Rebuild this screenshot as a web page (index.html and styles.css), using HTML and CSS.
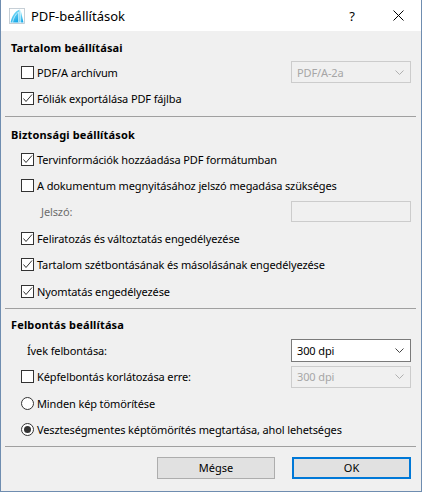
FILE: index.html
```html
<!DOCTYPE html>
<html lang="hu">
<head>
<meta charset="utf-8">
<title>PDF-beállítások</title>
<link rel="stylesheet" href="styles.css">
</head>
<body>
<div class="window">
  <div class="titlebar">
    <svg class="logo" width="16" height="16" viewBox="0 0 16 16">
      <defs>
        <linearGradient id="lg" x1="0" y1="0" x2="0.6" y2="1">
          <stop offset="0" stop-color="#9ff0ff"/>
          <stop offset="1" stop-color="#19a8e6"/>
        </linearGradient>
      </defs>
      <rect x="0.5" y="0.5" width="15" height="15" fill="#ffffff" stroke="#b8c4cc" stroke-width="0.8"/>
      <path d="M1.5 14.5 C2.5 9 5.5 3.5 10.5 1.5 L10.5 14.5 Z" fill="url(#lg)"/>
      <path d="M11.5 1.5 L14.5 14.5 L11.5 14.5 Z" fill="url(#lg)"/>
      <path d="M3.5 14.5 C4.5 10 6.5 6 9.5 4 L9.5 14.5" fill="none" stroke="#e8fbff" stroke-width="0.7"/>
    </svg>
    <span class="title">PDF-beállítások</span>
    <span class="help">?</span>
    <span class="close">
      <svg width="11" height="11" viewBox="0 0 11 11"><path d="M0.5 0.5 L10.5 10.5 M10.5 0.5 L0.5 10.5" stroke="#000" stroke-width="1"/></svg>
    </span>
  </div>

  <div class="content">
    <section class="group first">
      <div class="heading">Tartalom beállításai</div>
      <div class="row">
        <span class="check"><span class="box"></span>PDF/A archívum</span>
        <span class="select disabled">PDF/A-2a<svg class="chev" width="9" height="5" viewBox="0 0 9 5"><path d="M0.5 0.5 L4.5 4.5 L8.5 0.5" fill="none" stroke="currentColor"/></svg></span>
      </div>
      <div class="row">
        <span class="check"><span class="box checked"><svg width="11" height="11" viewBox="0 0 11 11"><path d="M1.5 5.5 L4 8.5 L10 1.5" fill="none" stroke="#333" stroke-width="1"/></svg></span>Fóliák exportálása PDF fájlba</span>
      </div>
    </section>
    <hr class="sep sep1">

    <section class="group second">
      <div class="heading">Biztonsági beállítások</div>
      <div class="row r2">
        <span class="check"><span class="box checked"><svg width="11" height="11" viewBox="0 0 11 11"><path d="M1.5 5.5 L4 8.5 L10 1.5" fill="none" stroke="#333" stroke-width="1"/></svg></span>Tervinformációk hozzáadása PDF formátumban</span>
      </div>
      <div class="row r2">
        <span class="check"><span class="box"></span>A dokumentum megnyitásához jelszó megadása szükséges</span>
      </div>
      <div class="row r2 indent">
        <span class="muted">Jelszó:</span>
        <span class="input disabled"></span>
      </div>
      <div class="row r2">
        <span class="check"><span class="box checked"><svg width="11" height="11" viewBox="0 0 11 11"><path d="M1.5 5.5 L4 8.5 L10 1.5" fill="none" stroke="#333" stroke-width="1"/></svg></span>Feliratozás és változtatás engedélyezése</span>
      </div>
      <div class="row r2">
        <span class="check"><span class="box checked"><svg width="11" height="11" viewBox="0 0 11 11"><path d="M1.5 5.5 L4 8.5 L10 1.5" fill="none" stroke="#333" stroke-width="1"/></svg></span>Tartalom szétbontásának és másolásának engedélyezése</span>
      </div>
      <div class="row r2">
        <span class="check"><span class="box checked"><svg width="11" height="11" viewBox="0 0 11 11"><path d="M1.5 5.5 L4 8.5 L10 1.5" fill="none" stroke="#333" stroke-width="1"/></svg></span>Nyomtatás engedélyezése</span>
      </div>
    </section>
    <hr class="sep sep2">

    <section class="group third">
      <div class="heading">Felbontás beállítása</div>
      <div class="row r3 label-row">
        <span class="plain">Ívek felbontása:</span>
        <span class="select active">300 dpi<svg class="chev" width="9" height="5" viewBox="0 0 9 5"><path d="M0.5 0.5 L4.5 4.5 L8.5 0.5" fill="none" stroke="currentColor"/></svg></span>
      </div>
      <div class="row r3">
        <span class="check"><span class="box"></span>Képfelbontás korlátozása erre:</span>
        <span class="select disabled">300 dpi<svg class="chev" width="9" height="5" viewBox="0 0 9 5"><path d="M0.5 0.5 L4.5 4.5 L8.5 0.5" fill="none" stroke="currentColor"/></svg></span>
      </div>
      <div class="row r3">
        <span class="check"><span class="radio"></span>Minden kép tömörítése</span>
      </div>
      <div class="row r3">
        <span class="check"><span class="radio on"><span class="dot"></span></span>Veszteségmentes képtömörítés megtartása, ahol lehetséges</span>
      </div>
    </section>
    <hr class="sep sep3">

    <div class="buttons">
      <button class="btn cancel">Mégse</button>
      <button class="btn ok">OK</button>
    </div>
  </div>
</div>
</body>
</html>
```

FILE: styles.css
```css
* { box-sizing: border-box; }
html, body { margin: 0; padding: 0; }
body {
  background: #f0f0f0;
  font-family: "Noto Sans", "Open Sans", sans-serif;
  font-size: 11px;
  letter-spacing: -0.12px;
  color: #000;
}
.window {
  width: 422px;
  height: 492px;
  background: #f0f0f0;
  border: 1px solid #6f8db0;
  border-top: none;
  display: flex;
  flex-direction: column;
}
.titlebar {
  height: 31px;
  background: #fff;
  display: flex;
  align-items: center;
  padding-left: 8px;
  margin: 0 -1px;
  border-left: 1px solid #6f8db0;
  border-right: 1px solid #6f8db0;
}
.logo { display: block; flex: none; }
.title {
  margin-left: 6px;
  font-size: 13px;
  letter-spacing: 0;
  flex: 1;
}
.help {
  font-size: 13px;
  width: 46px;
  text-align: center;
}
.close {
  width: 46px;
  display: flex;
  justify-content: center;
  align-items: center;
}
.close svg { display: block; }

.content { display: flex; flex-direction: column; }
.group.first { padding-top: 4px; }
.group.second { padding-top: 5px; }
.group.third { padding-top: 4px; }
.heading {
  height: 24px;
  display: flex;
  align-items: center;
  padding-left: 10px;
  font-weight: bold;
  letter-spacing: 0.15px;
}
.row {
  height: 26px;
  display: flex;
  align-items: center;
  justify-content: space-between;
  padding-left: 20px;
  padding-right: 10px;
}
.row.r2 { height: 26.4px; }
.row.r3 { height: 26.5px; }
.row.indent { padding-left: 40px; }
.row.label-row { padding-left: 26px; }
.check { display: flex; align-items: center; }
.box {
  width: 13px;
  height: 13px;
  border: 1px solid #333;
  background: #fff;
  margin-right: 3px;
  flex: none;
  display: flex;
  align-items: center;
  justify-content: center;
}
.box svg { display: block; }
.radio {
  width: 13px;
  height: 13px;
  border: 1px solid #333;
  border-radius: 50%;
  background: #fff;
  margin-right: 3px;
  flex: none;
  display: flex;
  align-items: center;
  justify-content: center;
}
.radio .dot {
  width: 7px;
  height: 7px;
  border-radius: 50%;
  background: #333;
}
.muted { color: #6d6d6d; }
.select {
  width: 120px;
  height: 22px;
  display: flex;
  align-items: center;
  justify-content: space-between;
  padding: 0 6px 0 5px;
  border: 1px solid #ccc;
}
.select.disabled { color: #a6a6a6; background: #f0f0f0; }
.select.disabled .chev { color: #b0b0b0; }
.select.active { background: #fff; border-color: #7a7a7a; height: 23px; color: #000; }
.select.active .chev { color: #444; }
.input {
  width: 120px;
  height: 21px;
  border: 1px solid #ccc;
  background: #f0f0f0;
}
.sep {
  border: none;
  border-top: 1px solid #a0a0a0;
  height: 0;
  margin: 0 5px 0 4px;
}
.sep1 { margin-top: 5px; }
.sep2 { margin-top: 3.6px; }
.sep3 { margin-top: 3px; }
.buttons {
  display: flex;
  justify-content: flex-end;
  padding-right: 10px;
  margin-top: 10px;
  gap: 17px;
}
.btn {
  font-family: inherit;
  font-size: 11px;
  height: 22px;
  background: #e1e1e1;
  border: 1px solid #adadad;
  color: #000;
  padding: 0;
  margin: 0;
}
.cancel { width: 118px; }
.ok { width: 119px; border: 2px solid #0078d7; }
```
